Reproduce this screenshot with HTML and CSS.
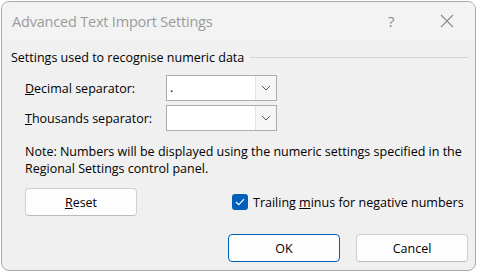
FILE: index.html
```html
<!DOCTYPE html>
<html>
<head>
<meta charset="utf-8">
<link rel="stylesheet" href="styles.css">
</head>
<body>
<div class="dialog">
  <div class="titlebar">
    <span class="title">Advanced Text Import Settings</span>
    <span class="help">?</span>
    <span class="close">
      <svg width="14" height="14" viewBox="0 0 14 14"><path d="M1 1 L13 13 M13 1 L1 13" stroke="#8a8a8a" stroke-width="1.1" fill="none"/></svg>
    </span>
  </div>
  <div class="content">
    <div class="group-head">
      <span class="group-label">Settings used to recognise numeric data</span>
      <span class="group-line"></span>
    </div>
    <div class="field">
      <span class="field-label"><u>D</u>ecimal separator:</span>
      <div class="combo">
        <span class="combo-value">.</span>
        <span class="combo-btn"><svg width="10" height="6" viewBox="0 0 10 6"><path d="M1 1 L5 5 L9 1" stroke="#555" stroke-width="1" fill="none"/></svg></span>
      </div>
    </div>
    <div class="field field-second">
      <span class="field-label"><u>T</u>housands separator:</span>
      <div class="combo">
        <span class="combo-value"></span>
        <span class="combo-btn"><svg width="10" height="6" viewBox="0 0 10 6"><path d="M1 1 L5 5 L9 1" stroke="#555" stroke-width="1" fill="none"/></svg></span>
      </div>
    </div>
    <p class="note">Note: Numbers will be displayed using the numeric settings specified in the Regional Settings control panel.</p>
    <div class="action-row">
      <button class="btn btn-reset"><u>R</u>eset</button>
      <label class="check">
        <span class="box"><svg width="10" height="8" viewBox="0 0 10 8"><path d="M1 4 L3.8 6.6 L9 1.2" stroke="#fff" stroke-width="1.2" fill="none"/></svg></span>
        <span class="check-label">Trailing <u>m</u>inus for negative numbers</span>
      </label>
    </div>
    <div class="footer">
      <button class="btn btn-default">OK</button>
      <button class="btn">Cancel</button>
    </div>
  </div>
</div>
</body>
</html>
```

FILE: styles.css
```css
html, body {
  margin: 0;
  padding: 0;
  background: #ffffff;
}
body {
  font-family: "Segoe UI", "Open Sans", "Noto Sans", sans-serif;
  font-size: 12.5px;
  color: #000;
  overflow: hidden;
  width: 478px;
  height: 272px;
}
.dialog {
  margin: 1px 0 0 1px;
  width: 475px;
  height: 270px;
  box-sizing: border-box;
  border: 1px solid #a8a8a8;
  border-radius: 8px;
  background: #f0f0f0;
  overflow: hidden;
  display: flex;
  flex-direction: column;
}
.titlebar {
  height: 38px;
  background: #f3f3f3;
  display: flex;
  align-items: center;
  padding-left: 10px;
  flex: none;
}
.title {
  font-size: 14.5px;
  color: #9b9b9b;
  flex: 1;
  letter-spacing: -0.2px;
}
.help {
  font-size: 15px;
  color: #8a8a8a;
  width: 20px;
  margin-right: 32px;
}
.close {
  display: flex;
  margin-right: 21px;
}
.content {
  flex: 1;
  display: flex;
  flex-direction: column;
  padding: 9px 7px 0 9px;
}
.group-head {
  display: flex;
  align-items: center;
  height: 16px;
}
.group-label {
  white-space: nowrap;
}
.group-line {
  flex: 1;
  height: 1px;
  background: #d4d4d4;
  margin-left: 6px;
}
.field {
  display: flex;
  align-items: center;
  margin-top: 10px;
  padding-left: 14px;
}
.field-second {
  margin-top: 4px;
}
.field-label {
  width: 141px;
}
.combo {
  width: 111px;
  height: 26px;
  box-sizing: border-box;
  border: 1px solid #adadad;
  background: #fff;
  display: flex;
}
.combo-value {
  flex: 1;
  padding-left: 3px;
  line-height: 24px;
}
.combo-btn {
  width: 20px;
  border-left: 1px solid #e3e3e3;
  background: #f7f7f7;
  display: flex;
  align-items: center;
  justify-content: center;
}
.note {
  margin: 12px 0 0 14px;
  line-height: 17px;
}
.action-row {
  display: flex;
  align-items: center;
  margin-top: 11px;
  padding-left: 14px;
}
.btn {
  font-family: inherit;
  font-size: 12.5px;
  color: #000;
  background: #fdfdfd;
  border: 1px solid #d0d0d0;
  border-bottom-color: #bcbcbc;
  border-radius: 4px;
  width: 112px;
  height: 28px;
  padding: 0;
}
.check {
  display: flex;
  align-items: center;
  margin-left: 95px;
}
.box {
  width: 16px;
  height: 16px;
  border-radius: 3px;
  background: #005fb8;
  display: flex;
  align-items: center;
  justify-content: center;
  margin-right: 5px;
}
.footer {
  display: flex;
  justify-content: flex-end;
  gap: 16px;
  margin-top: 18px;
}
.btn-default {
  border: 1px solid #005fb8;
}
```
